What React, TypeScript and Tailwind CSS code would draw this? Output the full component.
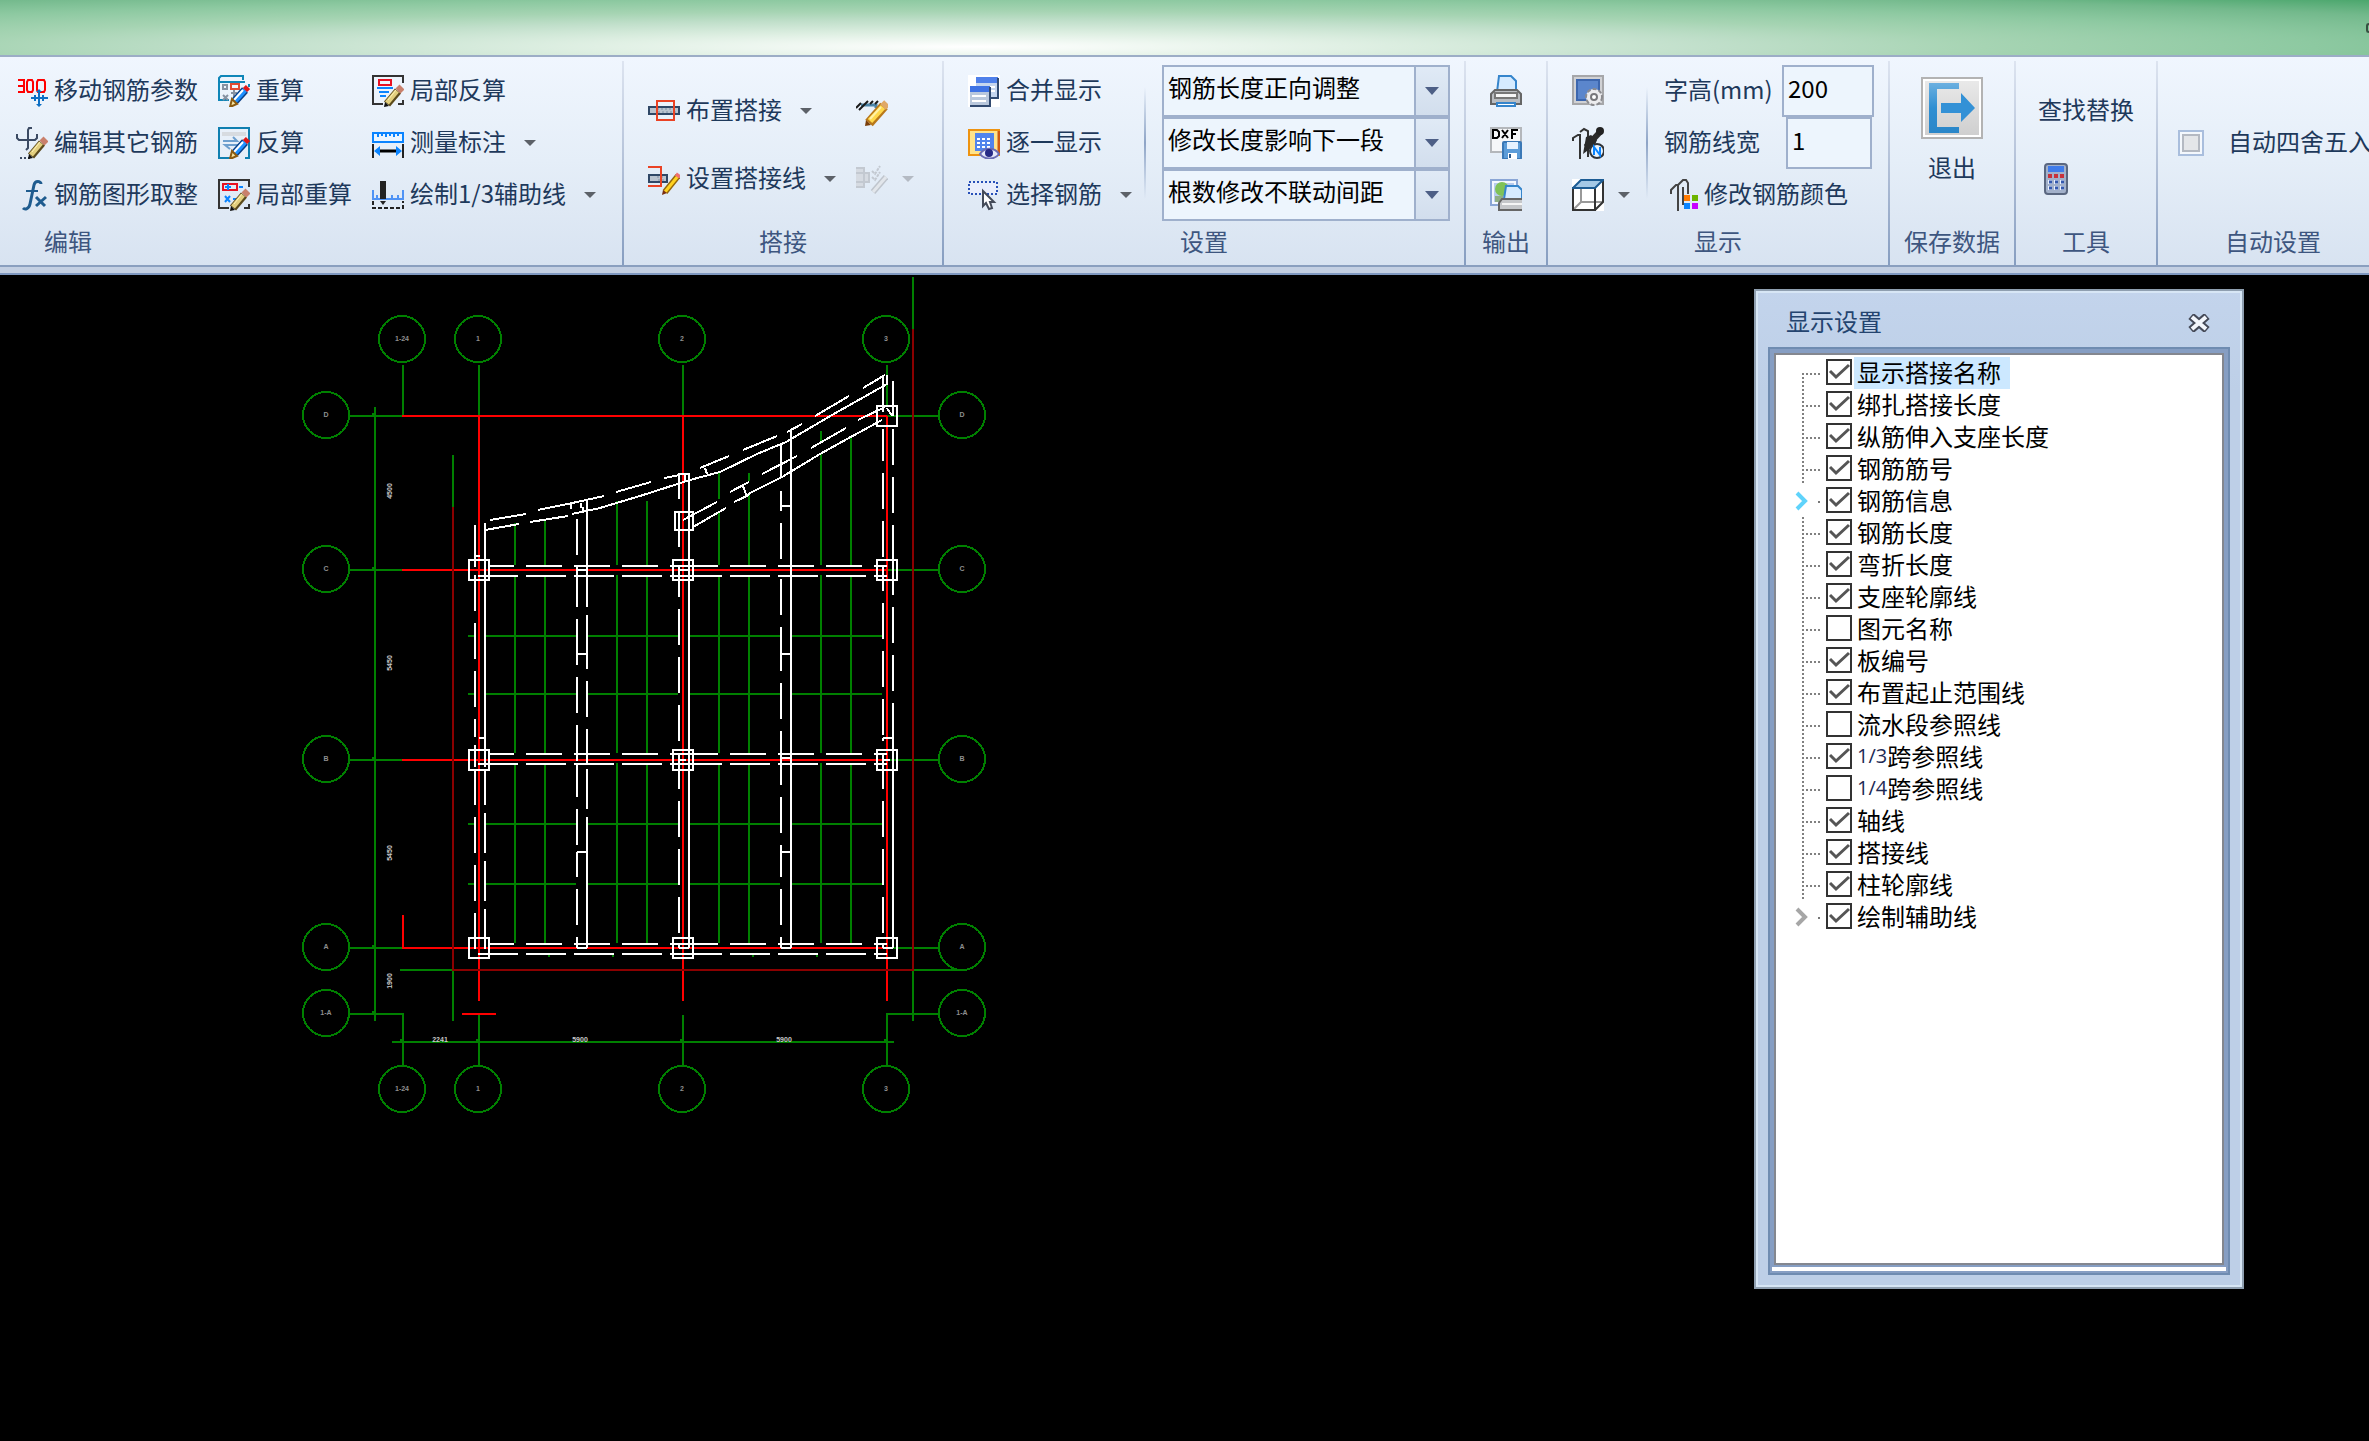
import { useState, type ReactNode } from "react";
import clsx from "clsx";

/* ---------- icons ---------- */

function Icon({ children, className }: { children: ReactNode; className?: string }) {
    return (
        <svg viewBox="0 0 32 32" className={clsx("h-8 w-8 shrink-0", className)} fill="none" strokeWidth="2">
            {children}
        </svg>
    );
}

function WoodPencil() {
    return (
        <g>
            <path d="M15 29l11-13" stroke="#5b4a1c" strokeWidth="8" />
            <path d="M15 28l10-12" stroke="#e3cf7e" strokeWidth="5" />
            <path d="M16 25l8-10" stroke="#fff3b8" strokeWidth="1" />
            <path d="M26 16l4-4" stroke="#c9806c" strokeWidth="7" />
            <path d="M12 32l1-5 4 4z" fill="#111" />
        </g>
    );
}

function BluePencil() {
    return (
        <g>
            <path d="M17 26l10-11" stroke="#0a3f86" strokeWidth="8" />
            <path d="M17 26l10-11" stroke="#1e90ff" strokeWidth="5" />
            <path d="M16 25l9-10" stroke="#fff" strokeWidth="2" />
            <path d="M27 15l3-3" stroke="#e01818" strokeWidth="6" />
            <path d="M12 32l2-8 5 5z" fill="#f6e3a0" stroke="#8a5a10" />
        </g>
    );
}

const MoveParamIcon = () => (
    <Icon>
        <path d="M2 5h6v12H2M2 11h6" stroke="#f00" />
        <path d="M12 5h4l1 2v8l-1 2h-4l-1-2V7z" stroke="#f00" />
        <path d="M22 5h6l1 2v8l-1 2h-6l-1-2V7z" stroke="#f00" />
        <path d="M23 15v16M15 23h17M19 20v6M27 20v6" stroke="#0d6fc4" />
        <path d="M20 17l3-3 3 3M20 29l3 3 3-3" fill="#0d6fc4" />
    </Icon>
);

const EditRebarIcon = () => (
    <Icon>
        <path d="M1 7v4l2 2h16l2-2V7M16 1h-3l-1 2v18l-2 2" stroke="#3b4a63" />
        <path d="M4 31h10" stroke="#3b4a63" strokeDasharray="2 2" />
        <WoodPencil />
    </Icon>
);

const FxIcon = () => (
    <Icon>
        <path d="M25 5c0-3-6-4-7 1l-4 19c-1 5-5 6-7 4" stroke="#1f5c8f" strokeWidth="3" />
        <path d="M10 12h12" stroke="#1f5c8f" />
        <path d="M20 18l9 9M30 18l-10 9" stroke="#1f5c8f" strokeWidth="3" />
    </Icon>
);

const RecalcIcon = () => (
    <Icon>
        <path d="M1 26V3l2-2h22v4M1 7h26" stroke="#0f86b8" />
        <path d="M1 7v18h10M31 9v3" stroke="#0f86b8" />
        <path d="M5 10h4v4H5zM5 20l5 5M10 20l-5 5" stroke="#8792a2" />
        <path d="M13 9h8v5h-8z" stroke="#e04a32" />
        <path d="M13 18h6M16 15v7" stroke="#8792a2" />
        <BluePencil />
    </Icon>
);

const ReverseIcon = () => (
    <Icon>
        <path d="M4 5h24v4H4z" fill="#d7dbe0" />
        <path d="M12 31H1V1h30v30h-4" stroke="#0f7fb0" />
        <path d="M5 14h14l-4-4M23 18H7l5 4" stroke="#6d9fce" />
        <BluePencil />
    </Icon>
);

const LocalRecalcIcon = () => (
    <Icon>
        <path d="M11 29H1V1h30v7M26 29h5v-4" stroke="#333" />
        <path d="M5 5h14v6H5z" stroke="#e81123" />
        <path d="M7 8h6M10 5v6M21 8h4M7 17l5 6M12 17l-5 6M15 20h4" stroke="#0a84ff" />
        <WoodPencil />
    </Icon>
);

const LocalReverseIcon = () => (
    <Icon>
        <path d="M11 29H1V1h30v7M26 29h5v-4" stroke="#333" />
        <path d="M7 5h12v5H7z" stroke="#e81123" />
        <path d="M5 13h16M7 17h10M8 21h6" stroke="#0a84ff" />
        <WoodPencil />
    </Icon>
);

const MeasureIcon = () => (
    <Icon>
        <path d="M1 6h30v9H1z" fill="#eaf5ff" stroke="#0a84ff" />
        <path d="M6 6v4M10 6v3M14 6v4M18 6v3M22 6v4M26 6v3" stroke="#0a84ff" />
        <path d="M1 17v14M31 17v14" stroke="#222" />
        <path d="M8 24h16" stroke="#000" strokeWidth="3" />
        <path d="M2 24l6-5v10zM30 24l-6-5v10z" fill="#0a84ff" />
    </Icon>
);

const GuideLineIcon = () => (
    <Icon>
        <path d="M1 11v9h30V11M5 20v-4M20 20v-4M26 20v-4" stroke="#4f93f5" />
        <path d="M8 2h6v18H8z" fill="#222" />
        <path d="M8 22l3 4 3-4z" fill="#222" />
        <path d="M1 22v7h30v-7" stroke="#222" strokeDasharray="4 2" />
    </Icon>
);

function SpliceBar({ x = 0, w = 32 }: { x?: number; w?: number }) {
    return (
        <g>
            <rect x={x + 1} y="12" width={w - 2} height="7" fill="#b9c3cf" stroke="#2f4766" />
            <path d={`M${x + 9} 14h${w - 12}M${x + 10} 17h${w - 13}`} stroke="#7d8fa3" strokeWidth="1" strokeDasharray="2 2" />
        </g>
    );
}

const PlaceSpliceIcon = () => (
    <Icon>
        <SpliceBar />
        <rect x="9" y="6" width="17" height="19" stroke="#ea4224" />
    </Icon>
);

const SetSpliceLineIcon = () => (
    <Icon>
        <SpliceBar w={20} />
        <path d="M0 4h13v19H0" stroke="#ea4224" />
        <path d="M17 29l13-16" stroke="#94670c" strokeWidth="6" />
        <path d="M17 29l13-16" stroke="#ffd21f" strokeWidth="3" />
        <path d="M29 14l2-3" stroke="#f07070" strokeWidth="5" />
        <path d="M14 32l1-5 4 3z" fill="#7a2f10" />
    </Icon>
);

const PencilIcon = () => (
    <Icon>
        <path d="M5 10h15v3" stroke="#4b84a8" strokeWidth="3" />
        <path d="M0 13l5-5M3 15l6-6M9 9l3-3M14 9l3-3M19 9l3-3" stroke="#1b1b1b" />
        <path d="M13 28L28 11" stroke="#b9781a" strokeWidth="10" />
        <path d="M14 26L27 12" stroke="#ffd84c" strokeWidth="6" />
        <path d="M14 24L25 12" stroke="#fff2a8" strokeWidth="2" />
        <path d="M27 12l4-4" stroke="#e0a866" strokeWidth="8" />
        <path d="M9 31l1-6 5 5z" fill="#7a3e0a" />
    </Icon>
);

const DisabledEditIcon = () => (
    <Icon>
        <path d="M0 5h8v19H0M0 10h13v9H0" fill="#d6dbe2" stroke="#c3c9d1" />
        <path d="M16 8l3 3 5-8M16 14l3 3 5-8" stroke="#c3c9d1" strokeDasharray="3 1" />
        <path d="M17 29l13-15" stroke="#bfc5cd" strokeWidth="6" />
        <path d="M17 29l13-15" stroke="#e2e6eb" strokeWidth="3" />
    </Icon>
);

const MergeIcon = () => (
    <Icon>
        <rect width="32" height="32" fill="#fff" />
        <path d="M8 2h22v20H8z" fill="#c6d6ee" />
        <path d="M8 2h22v6H8z" fill="#4f80ea" />
        <path d="M11 12h16M11 16h16" stroke="#fff" />
        <path d="M30 3v20H8" stroke="#314a70" />
        <path d="M2 11h20v20H2z" fill="#b9c8dd" />
        <path d="M2 11h20v6H2z" fill="#3f73e4" />
        <path d="M4 21h14M4 26h14" stroke="#fff" />
        <path d="M22 12v19H2" stroke="#314a70" />
    </Icon>
);

const OneByOneIcon = () => (
    <Icon>
        <rect x="1" y="3" width="30" height="25" fill="#ffe38a" stroke="#ee9310" />
        <path d="M31 4v24" stroke="#cf5a12" strokeWidth="3" />
        <rect x="7" y="6" width="19" height="18" fill="#5184ec" />
        <path d="M9 12h15M9 16h15M9 20h15" stroke="#fff" strokeDasharray="3 2" />
        <path d="M12 27c4-7 15-7 19 0-4 6-15 6-19 0z" fill="#e6e9fa" stroke="#6a6cb4" />
        <circle cx="21" cy="26" r="4" fill="#262a86" />
    </Icon>
);

const SelectIcon = () => (
    <Icon>
        <rect x="1" y="3" width="28" height="12" fill="#e9eefc" stroke="#2850b8" strokeDasharray="2 2" />
        <path d="M15 12v15l3-3 3 6 3-1-2-6h4z" fill="#fff" stroke="#444b59" />
    </Icon>
);

const PrinterIcon = () => (
    <Icon>
        <path d="M7 17L9 1h12l5 5v11z" fill="#d6ebff" stroke="#3585cc" />
        <path d="M5 15h22l4 4v10H1V19z" fill="#b9bcc0" stroke="#666" />
        <path d="M5 18h22v5H5z" fill="#f6f6f6" stroke="#777" />
        <path d="M7 28h18v3H7z" fill="#fff" stroke="#3585cc" />
    </Icon>
);

const DxfIcon = () => (
    <Icon>
        <rect x="1" y="1" width="30" height="24" fill="#f6f7f9" stroke="#b4b7bb" />
        <path d="M3 3v8h4l2-2V5L7 3zM12 3l6 8M18 3l-6 8M22 12V3h6M22 7h4" stroke="#000" />
        <rect x="13" y="15" width="18" height="17" rx="1" fill="#5c9cd8" stroke="#3a78b6" />
        <path d="M17 15h11v7H17z" fill="#e6f2ff" />
        <path d="M18 26h9v6h-9z" fill="#fff" />
        <path d="M20 27v4" stroke="#2d5b8e" />
    </Icon>
);

const ImagePrintIcon = () => (
    <Icon>
        <rect x="1" y="1" width="26" height="25" fill="#f4f8ff" stroke="#8aa6d6" />
        <path d="M4 4h20v19H4z" fill="#b9ccee" />
        <circle cx="12" cy="10" r="7" fill="#7fc258" />
        <path d="M5 17h8v6H5z" fill="#8fae86" />
        <path d="M14 20l2-13h12l4 4v9z" fill="#d6ebff" stroke="#3585cc" />
        <path d="M32 20H12l-3 4v7h23" fill="#c5c7ca" stroke="#666" />
        <path d="M12 25h20" stroke="#f5f5f5" />
    </Icon>
);

const ScreenGearIcon = () => (
    <Icon>
        <rect x="1" y="1" width="30" height="28" fill="#d0d1d4" stroke="#a6a7aa" />
        <rect x="5" y="5" width="22" height="20" fill="#5b86cc" stroke="#3c66ae" />
        <circle cx="22" cy="22" r="8" fill="#ececee" stroke="#8b8b8f" strokeDasharray="4 2" />
        <circle cx="22" cy="22" r="3" fill="#fff" stroke="#77777b" />
    </Icon>
);

const RebarNIcon = () => (
    <Icon>
        <path d="M1 14v-3l5-3h2v24M8 5l4-3 4 2v26" stroke="#333" />
        <path d="M11 27l3-17 5-2 6 5-2 5z" fill="#2a2a2a" />
        <path d="M14 20L29 4" stroke="#2a2a2a" strokeWidth="6" />
        <circle cx="28" cy="4" r="4" fill="#222" />
        <circle cx="25" cy="24" r="7" fill="#e8f4ff" stroke="#2f3338" />
        <path d="M22 28v-8l6 8v-8" stroke="#0a84ff" />
    </Icon>
);

const CubeIcon = () => (
    <Icon>
        <rect width="32" height="32" fill="#fff" />
        <path d="M9 1v22h22M9 23l-8 8" stroke="#999" />
        <path d="M1 9h22v22H1zM31 1v22l-8 8" stroke="#333" />
        <path d="M1 9l8-8h22l-8 8z" fill="#a3c8e6" stroke="#1c5c94" />
    </Icon>
);

const RebarColorIcon = () => (
    <svg viewBox="0 0 28 32" className="h-8 w-7 shrink-0" fill="none" strokeWidth="2">
        <path d="M1 15v-4l5-5h2v26M8 6l5-5h3l2 3v11M13 26V8" stroke="#444" />
        <path d="M14 16h6v6h-6z" fill="#ff7a00" />
        <path d="M22 16h6v6h-6z" fill="#6cb400" />
        <path d="M14 24h6v6h-6z" fill="#0a84ff" />
        <path d="M22 24h6v6h-6z" fill="#c800ff" />
    </svg>
);

const ExitIcon = () => (
    <svg viewBox="0 0 62 62" className="h-[62px] w-[62px]">
        <defs>
            <linearGradient id="exitBg" x1="0" y1="0" x2="0" y2="1">
                <stop offset="0" stopColor="#e9e9e9" />
                <stop offset="1" stopColor="#cfcfcf" />
            </linearGradient>
            <linearGradient id="exitFg" x1="0" y1="0" x2="0" y2="1">
                <stop offset="0" stopColor="#6cb0e0" />
                <stop offset="0.5" stopColor="#2f8fd2" />
                <stop offset="1" stopColor="#2a86c8" />
            </linearGradient>
        </defs>
        <rect x="1" y="1" width="60" height="60" fill="#fff" stroke="#b3b3b3" strokeWidth="2" />
        <rect x="4" y="4" width="54" height="54" fill="url(#exitBg)" />
        <path d="M8 6h30v6H16v38h22v6H8z" fill="url(#exitFg)" />
        <path d="M20 26h20V16l14 15-14 14V36H20z" fill="#3391d6" />
    </svg>
);

const CalculatorIcon = () => (
    <svg viewBox="0 0 24 32" className="h-8 w-6">
        <rect x="1" y="1" width="22" height="30" rx="3" fill="#a3b1ca" stroke="#5a6780" strokeWidth="2" />
        <rect x="4" y="3" width="16" height="6" fill="#3f7bea" />
        <path d="M4 13h16" stroke="#c8323c" strokeWidth="4" strokeDasharray="4 2" />
        <path d="M4 19h16M4 25h16" stroke="#e8efff" strokeWidth="4" strokeDasharray="4 2" />
        <path d="M5 19h16M5 25h16" stroke="#3459ae" strokeWidth="3" strokeDasharray="3 3" />
    </svg>
);

function Caret({ className = "text-[#5c6168]" }: { className?: string }) {
    return (
        <svg viewBox="0 0 12 6" className={clsx("h-1.5 w-3 shrink-0", className)}>
            <path d="M0 0h12L6 6z" fill="currentColor" />
        </svg>
    );
}

/* ---------- ribbon ---------- */

function ToolButton({ icon, label, menu, disabled }: { icon: ReactNode; label?: string; menu?: boolean; disabled?: boolean }) {
    return (
        <button type="button" disabled={disabled} className="flex items-center whitespace-nowrap">
            {icon}
            {label && <span className="ml-1.5 pb-1">{label}</span>}
            {menu && (
                <span className={clsx(label ? "ml-[18px]" : "ml-3.5")}>
                    <Caret className={disabled ? "text-[#b4bac3]" : "text-[#5c6168]"} />
                </span>
            )}
        </button>
    );
}

function Group({ title, className, titleClass, children }: { title: string; className: string; titleClass?: string; children: ReactNode }) {
    return (
        <section className={clsx("flex shrink-0", className)}>
            <div className="flex flex-1 flex-col pt-2">
                <div className="flex h-[156px]">{children}</div>
                <h2 className={clsx("h-11 leading-10 text-[#3e567f]", titleClass || "text-center")}>{title}</h2>
            </div>
            <div className="mt-1 w-0.5 bg-linear-to-b from-[#dde4f0] via-[#b3c1d8] to-[#869dc0]" />
        </section>
    );
}

const InnerRule = () => (
    <div className="my-[22px] w-0.5 bg-linear-to-b from-transparent via-[#8ea4c6] to-transparent" />
);

const COMBOS = [
    { label: "长度调整", value: "钢筋长度正向调整" },
    { label: "长度影响", value: "修改长度影响下一段" },
    { label: "根数联动", value: "根数修改不联动间距" },
];

function Combo({ label, value }: { label: string; value: string }) {
    return (
        <div className="flex h-[52px] border-2 border-[#9fb0cc] bg-[#edf5fd]">
            <select aria-label={label} className="flex-1 appearance-none px-1 pb-2 text-black outline-none">
                <option>{value}</option>
            </select>
            <span className="flex w-[34px] items-center justify-center border-l-2 border-[#9fb0cc] bg-linear-to-b from-[#e0eaf6] to-[#d2deed]">
                <svg viewBox="0 0 14 8" className="h-2 w-3.5">
                    <path d="M0 0h14L7 8z" fill="#4d5f86" />
                </svg>
            </span>
        </div>
    );
}

function Ribbon() {
    return (
        <div className="border-b-2 border-[#7f98c0] bg-[#c3cfe2] pb-1.5">
            <div className="flex h-[212px] overflow-hidden border-y-2 border-t-[#9cadc6] border-b-[#8a9fbf] bg-linear-to-b from-[#f0f6fe] via-[#e5eef8] to-[#d8e3f1]">
                <Group title="编辑" className="w-[624px]" titleClass="pl-11">
                    <div className="grid auto-rows-[52px] grid-cols-[202px_154px_auto] pl-4">
                        <ToolButton icon={<MoveParamIcon />} label="移动钢筋参数" />
                        <ToolButton icon={<RecalcIcon />} label="重算" />
                        <ToolButton icon={<LocalReverseIcon />} label="局部反算" />
                        <ToolButton icon={<EditRebarIcon />} label="编辑其它钢筋" />
                        <ToolButton icon={<ReverseIcon />} label="反算" />
                        <ToolButton icon={<MeasureIcon />} label="测量标注" menu />
                        <ToolButton icon={<FxIcon />} label="钢筋图形取整" />
                        <ToolButton icon={<LocalRecalcIcon />} label="局部重算" />
                        <ToolButton icon={<GuideLineIcon />} label="绘制1/3辅助线" menu />
                    </div>
                </Group>

                <Group title="搭接" className="w-80">
                    <div className="grid auto-rows-[68px] grid-cols-[208px_auto] py-3 pl-6">
                        <ToolButton icon={<PlaceSpliceIcon />} label="布置搭接" menu />
                        <ToolButton icon={<PencilIcon />} />
                        <ToolButton icon={<SetSpliceLineIcon />} label="设置搭接线" menu />
                        <ToolButton icon={<DisabledEditIcon />} menu disabled />
                    </div>
                </Group>

                <Group title="设置" className="w-[522px]">
                    <div className="grid w-[200px] auto-rows-[52px] pl-6">
                        <ToolButton icon={<MergeIcon />} label="合并显示" />
                        <ToolButton icon={<OneByOneIcon />} label="逐一显示" />
                        <ToolButton icon={<SelectIcon />} label="选择钢筋" menu />
                    </div>
                    <InnerRule />
                    <div className="ml-4 w-72">
                        {COMBOS.map((c) => (
                            <Combo key={c.label} {...c} />
                        ))}
                    </div>
                </Group>

                <Group title="输出" className="w-[82px]">
                    <div className="grid auto-rows-[52px] pl-6">
                        <ToolButton icon={<PrinterIcon />} />
                        <ToolButton icon={<DxfIcon />} />
                        <ToolButton icon={<ImagePrintIcon />} />
                    </div>
                </Group>

                <Group title="显示" className="w-[342px]">
                    <div className="grid w-[98px] auto-rows-[52px] pl-6">
                        <ToolButton icon={<ScreenGearIcon />} />
                        <ToolButton icon={<RebarNIcon />} />
                        <ToolButton icon={<CubeIcon />} menu />
                    </div>
                    <InnerRule />
                    <div className="ml-4 grid auto-rows-[52px]">
                        <div className="flex items-center">
                            <label htmlFor="textHeight" className="w-[118px] pb-1">字高(mm)</label>
                            <input id="textHeight" defaultValue="200" className="h-[52px] w-[92px] border-2 border-[#9fb0cc] bg-[#edf5fd] px-1 pb-2 text-black outline-none" />
                        </div>
                        <div className="flex items-center">
                            <label htmlFor="lineWidth" className="w-[122px] pb-1">钢筋线宽</label>
                            <input id="lineWidth" defaultValue="1" className="h-[52px] w-[86px] border-2 border-[#9fb0cc] bg-[#edf5fd] px-1 pb-2 text-black outline-none" />
                        </div>
                        <div className="flex pl-1.5">
                            <ToolButton icon={<RebarColorIcon />} label="修改钢筋颜色" />
                        </div>
                    </div>
                </Group>

                <Group title="保存数据" className="w-[126px]">
                    <button type="button" className="flex w-full flex-col items-center pt-3">
                        <ExitIcon />
                        <span className="mt-3">退出</span>
                    </button>
                </Group>

                <Group title="工具" className="w-[142px]">
                    <div className="grid auto-rows-[68px] py-3 pl-[22px]">
                        <button type="button" className="pb-1 text-left">查找替换</button>
                        <button type="button" aria-label="计算器" className="pl-1.5">
                            <CalculatorIcon />
                        </button>
                    </div>
                </Group>

                <Group title="自动设置" className="w-[232px]">
                    <label className="flex items-center pl-5 whitespace-nowrap">
                        <input
                            type="checkbox"
                            className="mr-6 h-[26px] w-[26px] appearance-none border-2 border-[#a9bedd] bg-[#e4e6e9] shadow-[inset_0_0_0_2px_#f4f8fd,inset_0_0_0_4px_#b4b9c2]"
                        />
                        <span className="pb-1">自动四舍五入</span>
                    </label>
                </Group>
            </div>
        </div>
    );
}

/* ---------- plan drawing ---------- */

const AXES: [number, number, string][] = [
    ...[339, 1089].flatMap((y) => [[402, y, "1-24"], [478, y, "1"], [682, y, "2"], [886, y, "3"]] as [number, number, string][]),
    ...[326, 962].flatMap((x) => [[x, 415, "D"], [x, 569, "C"], [x, 759, "B"], [x, 947, "A"], [x, 1013, "1-A"]] as [number, number, string][]),
];

// x position followed by [from, to] runs
const V_WALLS: [number, [number, number][]][] = [
    [475, [[525, 567], [575, 611], [623, 659], [671, 707], [719, 737], [745, 767], [771, 805], [817, 853], [865, 901], [913, 949]]],
    [485, [[523, 767], [771, 805], [813, 853], [861, 901], [909, 949]]],
    [577, [[519, 555], [567, 607], [619, 665], [677, 713], [725, 761], [763, 797], [809, 845], [852, 877], [889, 925], [937, 948]]],
    [587, [[501, 607], [615, 669], [681, 717], [729, 763], [769, 809], [817, 948]]],
    [679, [[473, 499], [513, 547], [567, 597], [609, 645], [657, 693], [705, 741], [755, 789], [801, 837], [849, 885], [897, 933], [945, 948]]],
    [689, [[473, 948]]],
    [781, [[443, 478], [491, 511], [523, 559], [579, 615], [627, 671], [683, 719], [731, 785], [797, 833], [845, 877], [889, 925], [937, 948]]],
    [791, [[430, 948]]],
    [883, [[375, 412], [429, 461], [473, 509], [521, 557], [565, 591], [603, 639], [651, 687], [699, 735], [738, 741], [755, 789], [801, 837], [849, 885], [897, 933], [943, 948]]],
    [893, [[381, 416], [429, 465], [477, 513], [525, 595], [607, 643], [655, 691], [703, 948]]],
];
const UPPER_RUNS = [[490, 514], [526, 562], [574, 610], [622, 658], [670, 718], [730, 766], [778, 814], [826, 862], [874, 887]];
const LOWER_RUNS = [[478, 518], [526, 566], [574, 614], [622, 662], [670, 722], [730, 770], [778, 818], [826, 866], [874, 887]];

const GRID_X: [number, [number, number][]][] = [
    [515, [[523, 565]]],
    [545, [[520, 565]]],
    [617, [[501, 565]]],
    [647, [[501, 565]]],
    [719, [[473, 499], [511, 565]]],
    [749, [[473, 481], [493, 565]]],
    [821, [[431, 441], [453, 565]]],
    [851, [[436, 565]]],
];

const v = (x: number, runs: number[][]) => runs.map(([a, b]) => `M${x} ${a}V${b}`).join("");
const h = (y: number, runs: number[][]) => runs.map(([a, b]) => `M${a} ${y}H${b}`).join("");

const DIMS: [number, number, string, boolean][] = [
    [390, 491, "4500", true],
    [390, 663, "5450", true],
    [390, 853, "5450", true],
    [390, 981, "1900", true],
    [440, 1042, "2241", false],
    [580, 1042, "5900", false],
    [784, 1042, "5900", false],
];

function PlanDrawing() {
    return (
        <svg viewBox="0 275 1000 900" className="h-[900px] w-[1000px] shrink-0 font-[Liberation_Sans]" fill="none" strokeWidth="2" shapeRendering="crispEdges">
            {/* axis bubbles */}
            {AXES.map(([x, y, t]) => (
                <g key={`${x}-${y}`}>
                    <circle cx={x} cy={y} r="23" stroke="#008000" />
                    <text x={x} y={y + 2} fontSize="7" fontWeight="bold" textAnchor="middle" fill="#8f8f8f">{t}</text>
                </g>
            ))}

            {/* axis leads and slab grid */}
            <g stroke="#008000">
                <path d="M403 365V415M479 365V415M683 365V415M887 365V406M403 1013V1065M479 1015V1065M683 1015V1065M887 1013V1065" />
                <path d={[416, 570, 760, 948, 1014].map((y) => h(y, [[350, 402], [887, 939]])).join("")} />
                <path d="M375 407V1021M392 1042H894" />
                <path d="M372 414h4M372 568h4M372 758h4M372 946h4M372 1012h4M400 1040h4M476 1040h4M680 1040h4M884 1040h4" />
                {GRID_X.map(([x, runs]) => (
                    <path key={x} d={v(x, [...runs, [575, 753], [763, 943]])} />
                ))}
                <path d={[636, 694, 824, 884].map((y) => h(y, [[468, 474], [484, 576], [586, 678], [688, 780], [790, 882]])).join("")} />
                <path d="M453 455V507M453 970V1021M913 277V329M913 970V1021M400 970H453M913 970H966" />
                <path d="M549 953v4M613 953v4M753 953v4M817 953v4" />
            </g>

            {/* axis lines */}
            <g stroke="#f00">
                <path d="M402 416H887M402 570H887M402 760H887M402 948H887" />
                <path d="M479 416V1001M683 416V1001M887 416V1001M403 915V948M462 1014H496" />
            </g>
            <path d="M453 507V970H913V329" stroke="#8b0000" />

            {/* walls and beams */}
            <g stroke="#fff">
                {V_WALLS.map(([x, runs]) => (
                    <path key={x} d={v(x, runs)} />
                ))}
                {[566, 754, 944].map((y) => (
                    <path key={y} d={h(y, UPPER_RUNS) + h(y + 10, LOWER_RUNS)} />
                ))}
                <path d="M475 556h5M479 738h6M577 654h10M781 654h10M781 506h10M577 852h10M781 852h10M577 948h10M781 948h10M883 738h10M577 570h10M781 758h10M679 474h10M679 948h10M883 948h10M679 760h7M883 760h7M679 570h9" />
                <path d="M490 520L526 514M538 510L577 502L604 496M616 492L651 482M664 478L680 475M700 468L729 456M743 450L777 436M787 432L802 424M815 416L849 396M863 388L885 375" />
                <path d="M485 530L519 524M530 522L568 516M572 514L600 508L640 496L690 480L720 472L757 454L786 442L832 415L887 384" />
                <path d="M683 520L717 502M730 492L749 482M762 474L797 456M811 448L846 428M858 420L885 407" />
                <path d="M693 527L726 508M734 502L747 496L750 493L782 477L820 454L847 439L882 420" />
                <path d="M705 468L707 474M743 486L747 497M571 504v5M581 503v5M583 507v4M685 474v8M887 375v10M887 408l5 8" />
                {[479, 683, 887].flatMap((x) =>
                    [570, 760, 948].map((y) => <rect key={`${x}-${y}`} x={x - 10} y={y - 10} width="20" height="20" />)
                )}
                <rect x="877" y="406" width="20" height="20" />
                <rect x="675" y="512" width="18" height="18" />
            </g>

            {/* dimension figures */}
            {DIMS.map(([x, y, t, turned]) => (
                <text key={`${x}-${y}`} fontSize="7" fontWeight="bold" textAnchor="middle" fill="#c9c9c9" transform={turned ? `translate(${x + 2} ${y}) rotate(-90)` : `translate(${x} ${y})`}>
                    {t}
                </text>
            ))}
        </svg>
    );
}

/* ---------- display settings window ---------- */

interface TreeItem {
    text: string;
    prefix?: string;
    on: boolean;
    branch?: "hot" | "plain";
}

const ITEMS: TreeItem[] = [
    { text: "显示搭接名称", on: true },
    { text: "绑扎搭接长度", on: true },
    { text: "纵筋伸入支座长度", on: true },
    { text: "钢筋筋号", on: true },
    { text: "钢筋信息", on: true, branch: "hot" },
    { text: "钢筋长度", on: true },
    { text: "弯折长度", on: true },
    { text: "支座轮廓线", on: true },
    { text: "图元名称", on: false },
    { text: "板编号", on: true },
    { text: "布置起止范围线", on: true },
    { text: "流水段参照线", on: false },
    { text: "跨参照线", prefix: "1/3", on: true },
    { text: "跨参照线", prefix: "1/4", on: false },
    { text: "轴线", on: true },
    { text: "搭接线", on: true },
    { text: "柱轮廓线", on: true },
    { text: "绘制辅助线", on: true, branch: "plain" },
];

function TreeRow({ item, first, checked, onToggle }: { item: TreeItem; first: boolean; checked: boolean; onToggle: () => void }) {
    return (
        <li className="flex h-8 items-center">
            <svg viewBox="0 0 50 32" className="h-8 w-[50px] shrink-0" fill="none" strokeWidth="2" shapeRendering="crispEdges">
                {item.branch ? (
                    <>
                        <path
                            d="M21 8l8 8-8 8"
                            stroke={item.branch === "hot" ? "#5fd3fb" : "#a6a6a6"}
                            strokeWidth="4"
                            shapeRendering="auto"
                        />
                        <path d="M42 17h2" stroke="#777" />
                    </>
                ) : (
                    <>
                        <path d={first ? "M27 16V32" : "M27 0V32"} stroke="#808080" strokeDasharray="2 2" />
                        <path d="M30 17H44" stroke="#808080" strokeDasharray="2 2" />
                    </>
                )}
            </svg>
            <label className="flex items-center">
                <span className="grid h-7 w-[26px] pb-0.5">
                    <input type="checkbox" checked={checked} onChange={onToggle} className="col-start-1 row-start-1 h-[26px] w-[26px] appearance-none border-2 border-[#333] bg-white" />
                    {checked && (
                        <svg viewBox="0 0 26 26" className="pointer-events-none col-start-1 row-start-1 h-[26px] w-[26px]" fill="none">
                            <path d="M4 12l6 6L23 6" stroke="#555" strokeWidth="3" />
                        </svg>
                    )}
                </span>
                <span className={clsx("ml-0.5 flex h-8 items-center pr-[9px] pl-[3px] leading-[30px] whitespace-nowrap", first && "bg-[#cce8ff]")}>
                    <span className="flex pb-0.5">
                        {item.prefix && <span className="font-[Open_Sans] text-xl leading-[30px] text-[#1d2a55]">{item.prefix}</span>}
                        {item.text}
                    </span>
                </span>
            </label>
        </li>
    );
}

function DisplaySettings() {
    const [states, setStates] = useState(ITEMS.map((i) => i.on));
    const toggle = (n: number) => setStates(states.map((s, i) => (i === n ? !s : s)));

    return (
        <aside className="mt-3.5 mr-[125px] flex h-[1000px] w-[490px] flex-col border-2 border-[#8f9fb0] bg-linear-to-b from-[#c3d4ec] to-[#bdcfe7] to-10% p-3 pt-0 shadow-[inset_0_0_0_2px_#d7e6f5]">
            <header className="flex h-14 items-center justify-between pt-2 pr-5 pl-[18px]">
                <h2 className="pb-1 text-[#24446f]">显示设置</h2>
                <button type="button" aria-label="关闭">
                    <svg viewBox="0 0 22 18" className="h-[18px] w-[22px]" fill="none">
                        <path d="M3 2l16 14M19 2L3 16" stroke="#454a58" strokeWidth="8" />
                        <path d="M4 3l14 12M18 3L4 15" stroke="#f4f7fc" strokeWidth="4" />
                    </svg>
                </button>
            </header>
            <div className="flex flex-1 flex-col border-2 border-[#6f8cb1] bg-[#869ec3] pt-1 pb-0.5">
                <ul className="mx-1 flex-1 border-2 border-[#84878f] bg-white pt-0.5 text-black">
                    {ITEMS.map((item, i) => (
                        <TreeRow key={i} item={item} first={i === 0} checked={states[i]} onToggle={() => toggle(i)} />
                    ))}
                </ul>
                <div className="mx-0.5 mt-0.5 h-1 bg-white" />
            </div>
        </aside>
    );
}

export default function App() {
    return (
        <div className="flex min-h-screen flex-col overflow-hidden bg-black font-['Noto_Sans_CJK_SC',sans-serif] text-2xl text-[#1e395b]">
            <header className="flex h-[55px] items-center justify-end bg-[radial-gradient(63%_95%_at_41%_85%,#ffffff,#e0f0e4_25%,#c0dfca_50%,#a6d4b3_68%,#8dc9a1_90%,#73b98c_111%,#4aa66c_130%)]">
                <span className="h-2.5 w-[3px] rounded-l-full border-2 border-r-0 border-[#35503f]" />
            </header>
            <Ribbon />
            <main className="flex flex-1 items-start justify-between bg-black">
                <PlanDrawing />
                <DisplaySettings />
            </main>
        </div>
    );
}
